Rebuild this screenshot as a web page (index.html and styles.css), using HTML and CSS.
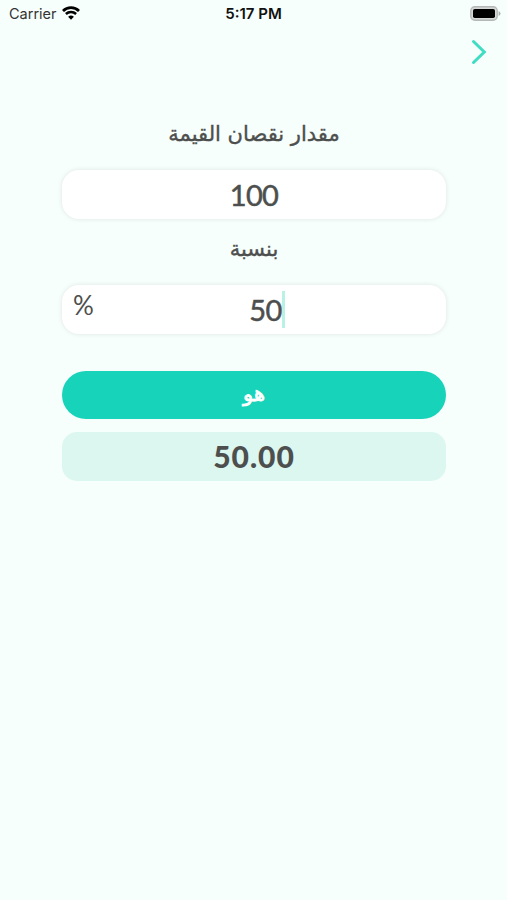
FILE: index.html
```html
<!DOCTYPE html>
<html lang="ar">
<head>
  <meta charset="UTF-8" />
  <meta name="viewport" content="width=device-width, initial-scale=1.0"/>
  <title>مقدار نقصان القيمة</title>
  <link rel="stylesheet" href="styles.css">
</head>
<body>
  <div class="status-bar">
    <div class="carrier">
      <span class="carrier-name">Carrier</span>
      <svg class="wifi" width="18" height="14" viewBox="0 0 18 14">
        <path d="M1 4.9 A11.5 11.5 0 0 1 17 4.9" fill="none" stroke="#000" stroke-width="2.8"/>
        <path d="M3.9 8 A7.4 7.4 0 0 1 14.1 8" fill="none" stroke="#000" stroke-width="2.5"/>
        <path d="M9 13.7 L6.1 10.8 A4.2 4.2 0 0 1 11.9 10.8 Z" fill="#000"/>
      </svg>
    </div>
    <div class="time">5:17 PM</div>
    <svg class="battery" width="31" height="15" viewBox="0 0 31 15">
      <rect x="0.8" y="0.8" width="26.4" height="13.4" rx="4" fill="#d5d8d7" stroke="#b4b8b7" stroke-width="1.4"/>
      <rect x="3" y="3" width="22" height="9" rx="1.8" fill="#000"/>
      <path d="M28.6 5 Q30.5 6 30.5 7.5 Q30.5 9 28.6 10 Z" fill="#a9adac"/>
    </svg>
  </div>

  <div class="nav">
    <svg class="next" width="16" height="26" viewBox="0 0 16 26">
      <path d="M2.5 2.5 L13.3 13 L2.5 23.5" fill="none" stroke="#40dcc3" stroke-width="3" stroke-linecap="round"/>
    </svg>
  </div>

  <div class="container">
    <div class="label" dir="rtl">مقدار نقصان القيمة</div>
    <div class="field">
      <span class="number">100</span>
    </div>
    <div class="label" dir="rtl">بنسبة</div>
    <div class="field field-percent">
      <span class="percent">%</span>
      <span class="number">50</span>
      <span class="caret"></span>
    </div>
    <button class="calculate" dir="rtl">هو</button>
    <div class="result">50.00</div>
  </div>
</body>
</html>
```

FILE: styles.css
```css
* {
  box-sizing: border-box;
}

body {
  margin: 0;
  height: 100vh;
  background-color: #f7fffc;
  color: #4d4f4e;
  font-family: "Lato", sans-serif;
}

.status-bar {
  display: grid;
  grid-template-columns: 1fr auto 1fr;
  align-items: center;
  height: 28px;
  padding: 0 6px 1px;
  font-family: "Inter", sans-serif;
  font-size: 14.5px;
}

.carrier {
  display: flex;
  align-items: center;
  gap: 5px;
  padding-left: 3px;
  color: #333;
}

.wifi {
  margin-top: -1px;
}

.time {
  color: #111;
  font-size: 15px;
  font-weight: 600;
}

.battery {
  justify-self: end;
  margin-top: -1px;
}

.nav {
  display: flex;
  justify-content: flex-end;
  height: 62px;
  padding: 11px 20px 0 0;
}

.container {
  display: flex;
  flex-direction: column;
  width: 384px;
  margin: 0 61px 0 62px;
  padding-top: 14px;
}

.label {
  height: 66px;
  padding-top: 14px;
  font-family: "DejaVu Sans", sans-serif;
  font-size: 21px;
  line-height: 32px;
  text-align: center;
  -webkit-text-stroke: 0.4px #4d4f4e;
}

.field {
  display: flex;
  align-items: center;
  justify-content: center;
  height: 49px;
  border-radius: 17px;
  background-color: #fff;
  box-shadow: 0 0 5px rgba(0, 0, 0, 0.1);
  font-size: 29px;
  position: relative;
}

.number {
  letter-spacing: -0.6px;
  -webkit-text-stroke: 0.5px #4d4f4e;
}

.percent {
  position: absolute;
  left: 11px;
  top: 6px;
  font-size: 26px;
  line-height: 28px;
}

.caret {
  width: 3px;
  height: 37px;
  background-color: #b9f1e4;
}

.field-percent .number {
  margin-left: 26px;
}

.calculate {
  height: 48px;
  margin-top: 37px;
  padding: 0 0 3px;
  border: none;
  border-radius: 24px;
  background-color: #17d3ba;
  color: white;
  font-family: "DejaVu Sans", sans-serif;
  font-size: 21px;
  -webkit-text-stroke: 0.8px white;
  cursor: pointer;
}

.result {
  height: 49px;
  margin-top: 13px;
  border-radius: 15px;
  background-color: #dcf6f0;
  font-size: 30px;
  font-weight: 900;
  letter-spacing: 1px;
  line-height: 49px;
  text-align: center;
}
```
